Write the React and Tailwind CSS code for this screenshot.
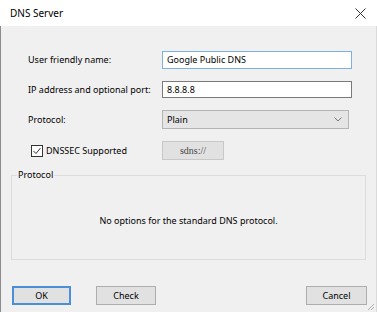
import React from "react";

export default function App() {
  return (
    <div className="w-[377px] h-[312px] bg-[#f0f0f0] flex flex-col text-[9px] text-black [font-family:'Noto_Sans',sans-serif] overflow-hidden">
      <div className="h-[26px] bg-white flex items-center justify-between pl-[10px] pr-[10px] shrink-0">
        <span className="text-[10px]">DNS Server</span>
        <svg width="11" height="11" viewBox="0 0 11 11" className="mr-[1px]">
          <path d="M0.5 0.5 L10.5 10.5 M10.5 0.5 L0.5 10.5" stroke="#333" strokeWidth="1" fill="none" />
        </svg>
      </div>
      <div className="flex-1 flex flex-col border-l border-[#8c8c8c] border-r border-r-[#dadada] relative">
        <div className="pl-[27px] pt-[25px] grid grid-cols-[134px_190px] gap-y-[12px] items-center">
          <span>User friendly name:</span>
          <div className="h-[18px] border border-[#7eb0e4] bg-white flex items-center pl-[4px]">Google Public DNS</div>
          <span>IP address and optional port:</span>
          <div className="h-[17px] border border-[#7a7a7a] bg-white flex items-center pl-[4px]">8.8.8.8</div>
          <span>Protocol:</span>
          <div className="h-[19px] w-[187px] border border-[#b4b4b4] bg-[#e5e5e5] flex items-center justify-between pl-[4px] pr-[6px]">
            <span>Plain</span>
            <svg width="8" height="5" viewBox="0 0 8 5">
              <path d="M0.5 0.5 L4 4 L7.5 0.5" stroke="#7a7a7a" strokeWidth="1" fill="none" />
            </svg>
          </div>
          <div className="flex items-center gap-[3px] pl-[3px]">
            <div className="w-[12px] h-[12px] border border-[#333] bg-white flex items-center justify-center">
              <svg width="10" height="10" viewBox="0 0 10 10">
                <path d="M1.5 5 L4 7.5 L8.5 2" stroke="#333" strokeWidth="1" fill="none" />
              </svg>
            </div>
            <span>DNSSEC Supported</span>
          </div>
          <div className="h-[19px] w-[62px] border border-[#c8c8c8] bg-[#e1e1e1] flex items-center justify-center text-[10px] text-[#444] [font-family:'Liberation_Serif',serif]">sdns://</div>
        </div>
        <div className="mx-[10px] mt-[15px] h-[85px] border border-[#dcdcdc] relative flex items-center justify-center">
          <span className="absolute -top-[8px] left-[5px] px-[1px] bg-[#f0f0f0]">Protocol</span>
          <span className="mt-[6px]">No options for the standard DNS protocol.</span>
        </div>
        <div className="flex items-center px-[11px] mt-[26px]">
          <div className="w-[59px] h-[19px] border-2 border-[#4a8fd8] bg-[#e1e1e1] flex items-center justify-center">OK</div>
          <div className="ml-[25px] w-[60px] h-[19px] border border-[#adadad] bg-[#e1e1e1] flex items-center justify-center">Check</div>
          <div className="ml-auto mr-[-2px] w-[61px] h-[19px] border border-[#adadad] bg-[#e1e1e1] flex items-center justify-center">Cancel</div>
        </div>
        <svg width="8" height="8" viewBox="0 0 8 8" className="absolute right-[1px] bottom-[1px]">
          <path d="M7 1 L1 7 M7 4 L4 7" stroke="#b0b0b0" strokeWidth="1" fill="none" />
        </svg>
      </div>
    </div>
  );
}
